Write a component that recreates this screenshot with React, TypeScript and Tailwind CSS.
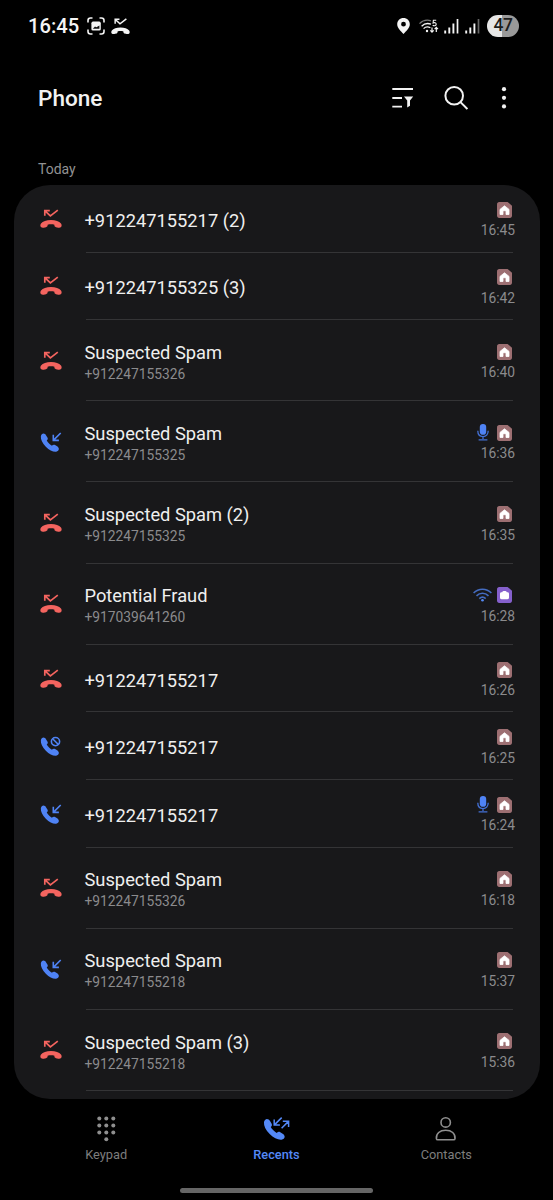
import React from 'react';

type CallKind = 'missed' | 'incoming' | 'blocked';

interface Call {
  id: number;
  kind: CallKind;
  name: string;
  number?: string;
  time: string;
  sim: 'home' | 'work';
  extra?: 'mic' | 'wifi';
}

const calls: Call[] = [
  { id: 1, kind: 'missed', name: '+912247155217 (2)', time: '16:45', sim: 'home' },
  { id: 2, kind: 'missed', name: '+912247155325 (3)', time: '16:42', sim: 'home' },
  { id: 3, kind: 'missed', name: 'Suspected Spam', number: '+912247155326', time: '16:40', sim: 'home' },
  { id: 4, kind: 'incoming', name: 'Suspected Spam', number: '+912247155325', time: '16:36', sim: 'home', extra: 'mic' },
  { id: 5, kind: 'missed', name: 'Suspected Spam (2)', number: '+912247155325', time: '16:35', sim: 'home' },
  { id: 6, kind: 'missed', name: 'Potential Fraud', number: '+917039641260', time: '16:28', sim: 'work', extra: 'wifi' },
  { id: 7, kind: 'missed', name: '+912247155217', time: '16:26', sim: 'home' },
  { id: 8, kind: 'blocked', name: '+912247155217', time: '16:25', sim: 'home' },
  { id: 9, kind: 'incoming', name: '+912247155217', time: '16:24', sim: 'home', extra: 'mic' },
  { id: 10, kind: 'missed', name: 'Suspected Spam', number: '+912247155326', time: '16:18', sim: 'home' },
  { id: 11, kind: 'incoming', name: 'Suspected Spam', number: '+912247155218', time: '15:37', sim: 'home' },
  { id: 12, kind: 'missed', name: 'Suspected Spam (3)', number: '+912247155218', time: '15:36', sim: 'home' },
];

// Handset lying flat, centred on 0,0
const HANDSET =
  'M0 -3.9C-4.6 -3.9 -8.2 -2.6 -10 -.4C-10.9 .7 -10.8 2.4 -10.1 3.1C-9.4 3.8 -8.2 3.9 -7.2 3.7L-5 3.2C-3.9 2.9 -3.4 2.2 -3.4 1.3V.7C-1.5 .2 1.5 .2 3.4 .7V1.3C3.4 2.2 3.9 2.9 5 3.2L7.2 3.7C8.2 3.9 9.4 3.8 10.1 3.1C10.8 2.4 10.9 .7 10 -.4C8.2 -2.6 4.6 -3.9 0 -3.9Z';

const MissedIcon: React.FC<{ className: string }> = ({ className }) => (
  <svg viewBox="0 0 22 22" className={className}>
    <path d={HANDSET} transform="translate(11 16)" fill="currentColor" />
    <path d="M5 2.8L10.4 7.9L17.8 2.2M4.8 7.8V2.6H9.8" fill="none" stroke="currentColor" strokeWidth="1.7" />
  </svg>
);

const CallIcon: React.FC<{ kind: CallKind }> = ({ kind }) => {
  if (kind === 'missed') {
    return <MissedIcon className="h-[22px] w-[22px] text-[#f4645f]" />;
  }
  return (
    <svg viewBox="0 0 22 22" className="h-[22px] w-[22px] text-[#4f83f5]">
      <path d={HANDSET} transform="translate(8.8 12.7) rotate(-135) scale(1.08)" fill="currentColor" />
      {kind === 'incoming' ? (
        <path d="M20.7 2L13.6 9.1M13.3 3.8V9.4H18.9" fill="none" stroke="currentColor" strokeWidth="1.6" />
      ) : (
        <g fill="none" stroke="currentColor" strokeWidth="1.6">
          <circle cx="15.5" cy="6.6" r="4.1" />
          <path d="M12.6 3.7L18.4 9.5" />
        </g>
      )}
    </svg>
  );
};

const SimIcon: React.FC<{ sim: 'home' | 'work' }> = ({ sim }) => (
  <svg viewBox="0 0 15 16" className="h-4 w-[15px]">
    <path
      d="M2.2 0H10.6L15 3.8V13.8C15 15 14.2 16 12.8 16H2.2C.9 16 0 15 0 13.8V2.2C0 1 .9 0 2.2 0Z"
      fill={sim === 'home' ? '#9d6f72' : '#8560cc'}
    />
    {sim === 'home' ? (
      <path d="M7.5 3.8L3 7.4V12.5H6V9.4C6 8.5 9 8.5 9 9.4V12.5H12V7.4Z" fill="#fff" stroke="#fff" strokeWidth=".8" strokeLinejoin="round" />
    ) : (
      <path d="M5.2 5.2C5.2 3.6 9.8 3.6 9.8 5.2H10.4C11.5 5.2 12 5.8 12 6.8V10.6C12 11.6 11.5 12.2 10.4 12.2H4.6C3.5 12.2 3 11.6 3 10.6V6.8C3 5.8 3.5 5.2 4.6 5.2Z" fill="#fff" />
    )}
  </svg>
);

const MicIcon = () => (
  <svg viewBox="0 0 12 17" className="mr-2 h-[17px] w-3">
    <rect x="2.8" y="0" width="6.4" height="10.8" rx="3.1" fill="#4f83f5" />
    <path d="M.8 6.8C.8 10.4 3 12.6 6 12.6S11.2 10.4 11.2 6.8M6 12.6V15M1.6 15.9H10.4" fill="none" stroke="#4370d6" strokeWidth="1.3" />
  </svg>
);

const WifiIcon = () => (
  <svg viewBox="0 0 19 14" className="mr-[5px] h-3.5 w-[19px]">
    <g fill="none" stroke="#446cc0" strokeWidth="1.6">
      <path d="M.6 5C5.6 -.1 13.4 -.1 18.4 5" />
      <path d="M3.5 7.9C7 4.4 12 4.4 15.5 7.9" />
      <path d="M6.3 10.6C8.2 8.8 10.8 8.8 12.7 10.6" />
    </g>
    <circle cx="9.5" cy="12.2" r="1.3" fill="#5589f5" />
  </svg>
);

const StatusBar = () => (
  <div className="flex h-[52px] items-center pr-[34px] pl-7 text-[#f4f4f4]">
    <span className="text-[20.2px] leading-6 font-medium">16:45</span>
    <svg viewBox="0 0 18 18" className="ml-2 h-[18px] w-[18px]">
      <path d="M1 5.5V3.5C1 2 2 1 3.5 1H5.5M12.5 1H14.5C16 1 17 2 17 3.5V5.5M17 12.5V14.5C17 16 16 17 14.5 17H12.5M5.5 17H3.5C2 17 1 16 1 14.5V12.5" fill="none" stroke="currentColor" strokeWidth="1.6" />
      <rect x="4.4" y="4.6" width="9.4" height="9" rx="1.6" fill="currentColor" />
      <path d="M5.8 11.8L8 9.4L9.4 10.2L12.4 8.4V11.8H5.8Z" fill="#111" />
    </svg>
    <MissedIcon className="ml-1.5 h-[19px] w-[19px]" />
    <svg viewBox="0 0 13 16" className="ml-auto h-4 w-[13px]">
      <path fillRule="evenodd" d="M6.5 0C2.9 0 .2 2.7 .2 6.2C.2 10.3 4 13 6.5 16C9 13 12.8 10.3 12.8 6.2C12.8 2.7 10.1 0 6.5 0ZM6.5 3.8A2.4 2.4 0 1 1 6.5 8.6A2.4 2.4 0 1 1 6.5 3.8Z" fill="currentColor" />
    </svg>
    <svg viewBox="0 0 20 15" className="ml-[9px] h-[15px] w-5">
      <g fill="none" stroke="currentColor" strokeWidth="1.3">
        <path d="M.5 4.6C3.5 1.6 8 .6 12 1.8" stroke="#777" />
        <path d="M2.6 7.2C5.2 4.6 8.8 4 12 5.2" />
        <path d="M4.6 9.6C6.6 7.7 9 7.5 11.4 8.8" />
        <path d="M17.2 1.2H14.4L14.1 4C15.4 3.3 17.2 3.6 17.2 5.2S15 7.2 13.7 6.2" strokeWidth="1.1" />
        <path d="M13 8.6V13M11.3 11.4L13 13.2L14.7 11.4M17.3 13V8.4M15.6 10.1L17.3 8.3L19 10.1" strokeWidth="1.2" />
      </g>
      <circle cx="8" cy="12" r="1.2" fill="currentColor" />
    </svg>
    {['#f4f4f4', '#666'].map((last) => (
      <svg key={last} viewBox="0 0 15 16" className="ml-[5px] h-4 w-[15px] last-of-type:ml-1.5">
        <path d="M1.2 12.5V15.5M5.3 9.5V15.5M9.4 5.5V15.5" stroke="currentColor" strokeWidth="1.9" />
        <path d="M13.5 1V15.5" stroke={last} strokeWidth="1.7" />
      </svg>
    ))}
    <div className="ml-[7px] flex h-[22px] w-8 items-center justify-center rounded-full bg-linear-to-r from-[#e6e6e6] from-47% to-[#999] to-47% text-[17.5px] leading-none font-medium tracking-tight text-[#1c1c1c]">
      47
    </div>
  </div>
);

const Header = () => (
  <header className="flex h-[92px] items-center pr-[46px] pl-[38px] text-[#f2f2f2]">
    <h1 className="pt-0.5 text-[22.6px] leading-7 font-medium">Phone</h1>
    <svg viewBox="0 0 22 20" className="ml-auto h-5 w-[22px]" fill="none" stroke="currentColor" strokeWidth="1.8">
      <path d="M.3 1H21M.3 10H10M.3 18.6H10" />
      <path d="M12 8.4H21.2L18 12.4V17.8L15.2 19.6V12.4Z" fill="currentColor" stroke="none" />
    </svg>
    <svg viewBox="0 0 24 24" className="ml-[30px] h-6 w-6" fill="none" stroke="currentColor" strokeWidth="2">
      <circle cx="10.2" cy="9.8" r="8.8" />
      <path d="M16.5 16.1L23.4 23" />
    </svg>
    <svg viewBox="0 0 6 22" className="ml-[33px] h-[22px] w-1.5" fill="currentColor">
      <circle cx="3" cy="2.2" r="2.1" />
      <circle cx="3" cy="10.8" r="2.1" />
      <circle cx="3" cy="19.4" r="2.1" />
    </svg>
  </header>
);

const CallRow: React.FC<{ call: Call }> = ({ call }) => (
  <li className={`flex pl-[26px] ${call.number ? 'h-[81.15px]' : 'h-[67.6px]'}`}>
    <div className="flex w-[46px] items-center">
      <CallIcon kind={call.kind} />
    </div>
    <div className="mr-[27px] flex flex-1 items-center border-b-[1.5px] border-[#343436] pt-1">
      <div className={call.number ? '-ml-px flex-1 pt-[2.5px]' : '-ml-px flex-1 pt-px'}>
        <div className="text-[18.3px] leading-[22px] text-[#efefef]">{call.name}</div>
        {call.number && <div className="text-[13.8px] leading-[21px] text-[#8b8b8d]">{call.number}</div>}
      </div>
      <div className="-mr-[2.5px] flex flex-col items-end">
        <div className="mr-[3px] flex h-[21px] items-center">
          {call.extra === 'mic' && <MicIcon />}
          {call.extra === 'wifi' && <WifiIcon />}
          <SimIcon sim={call.sim} />
        </div>
        <div className="text-[13.8px] leading-[21px] text-[#8b8b8d]">{call.time}</div>
      </div>
    </div>
  </li>
);

const BottomNav = () => (
  <nav className="grid grid-cols-3 px-[21px] pt-[17px] text-[12.8px] leading-4 text-[#7d7d7d]">
    <div className="flex flex-col items-center gap-[5px]">
      <svg viewBox="0 0 26 26" className="h-[26px] w-[26px]" fill="#8f8f8f">
        {[2.4, 9.4, 16.5].map((y) => [6.3, 13.3, 20.3].map((x) => <circle key={`${x}-${y}`} cx={x} cy={y} r="2" />))}
        <circle cx="13.3" cy="23.3" r="2" />
      </svg>
      <span>Keypad</span>
    </div>
    <div className="flex flex-col items-center gap-[5px] font-medium text-[#5489f7]">
      <svg viewBox="0 0 26 26" className="h-[26px] w-[26px] overflow-visible">
        <path d={HANDSET} transform="translate(10.1 14.6) rotate(-135) scale(1.24)" fill="currentColor" />
        <path d="M18.7 1.6L11.4 8.9M11.2 3.4V9.1H16.9M18.6 12.2L25.2 5.6M19.8 5.2H25.6V11" fill="none" stroke="currentColor" strokeWidth="1.5" />
      </svg>
      <span>Recents</span>
    </div>
    <div className="flex flex-col items-center gap-[5px]">
      <svg viewBox="0 0 26 26" className="-ml-px h-[26px] w-[26px]" fill="none" stroke="#8f8f8f" strokeWidth="1.6">
        <circle cx="12.7" cy="6.4" r="4.7" />
        <path d="M3.4 22.6C2.9 17.4 6.9 14.3 12.7 14.3S22.5 17.4 22 22.6C21.9 23.4 21.5 23.8 20.7 23.8H4.7C3.9 23.8 3.5 23.4 3.4 22.6Z" />
      </svg>
      <span className="-ml-px">Contacts</span>
    </div>
  </nav>
);

const App: React.FC = () => {
  return (
    <div className="flex h-[1200px] w-[553px] flex-col overflow-hidden bg-black font-['Roboto',sans-serif]">
      <StatusBar />
      <Header />
      <div className="h-[41px] pt-[15px] pl-[38px] text-[14px] leading-5 text-[#929292]">Today</div>
      <ul className="mx-[13.5px] h-[913.5px] shrink-0 overflow-hidden rounded-[36px] bg-[#18181a]">
        {calls.map((call) => (
          <CallRow key={call.id} call={call} />
        ))}
      </ul>
      <BottomNav />
      <div className="mx-auto mt-auto mb-[7px] h-[5px] w-[193px] rounded-full bg-[#666]" />
    </div>
  );
};

export default App;
